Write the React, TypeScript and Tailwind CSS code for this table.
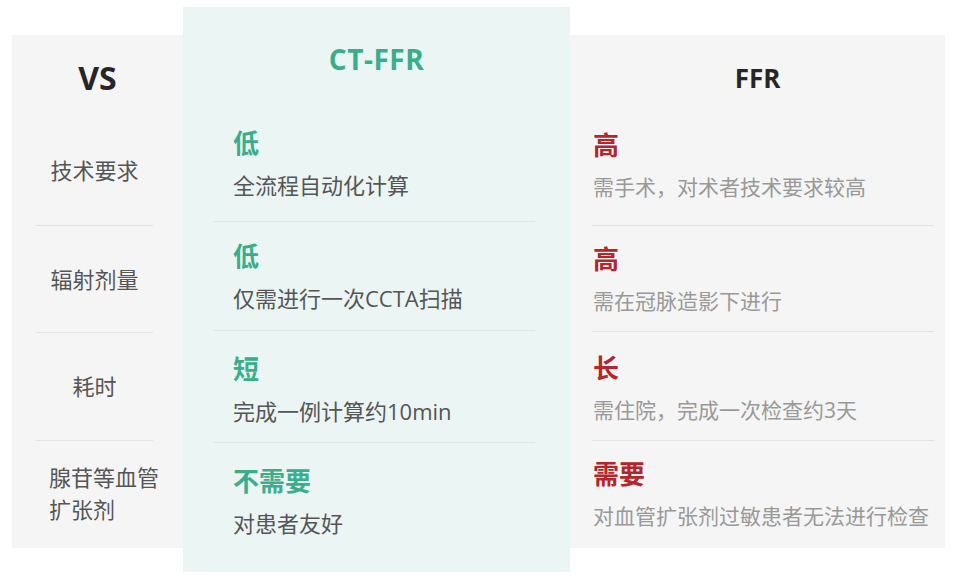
import React from "react"

const font = "font-['Open_Sans','Noto_Sans_CJK_SC',sans-serif]"

type Cell = { title: string; text: string }

const labels = [
  { text: "技术要求", h: "h-[110px]" },
  { text: "辐射剂量", h: "h-[107px]" },
  { text: "耗时", h: "h-[108px]" },
]

const ctffr: (Cell & { cls: string })[] = [
  { title: "低", text: "全流程自动化计算", cls: "h-[111px] pt-[12px] border-b" },
  { title: "低", text: "仅需进行一次CCTA扫描", cls: "h-[109px] pt-[14px] border-b" },
  { title: "短", text: "完成一例计算约10min", cls: "h-[112px] pt-[18px] border-b" },
  { title: "不需要", text: "对患者友好", cls: "flex-1 pt-[18px]" },
]

const ffr: (Cell & { cls: string })[] = [
  { title: "高", text: "需手术，对术者技术要求较高", cls: "h-[115px] pt-[14px] border-b" },
  { title: "高", text: "需在冠脉造影下进行", cls: "h-[106px] pt-[13px] border-b" },
  { title: "长", text: "需住院，完成一次检查约3天", cls: "h-[109px] pt-[16px] border-b" },
  { title: "需要", text: "对血管扩张剂过敏患者无法进行检查", cls: "flex-1 pt-[13px]" },
]

export default function App() {
  return (
    <div className={`w-[960px] h-[582px] bg-white ${font}`}>
      <div className="flex items-start pt-[7px] pl-[12px]">
        {/* left: row labels */}
        <div className="mt-[28px] w-[171px] h-[513px] bg-[#f5f5f5] flex flex-col">
          <div className="h-[81px] flex items-center justify-center pt-[5px] text-[32px] font-bold text-[#262626]">
            VS
          </div>
          <div className="ml-[24px] mr-[30px] flex flex-col flex-1">
            {labels.map((l) => (
              <div
                key={l.text}
                className={`${l.h} border-b border-[#e4e4e4] flex items-center justify-center text-[22px] text-[#555]`}
              >
                {l.text}
              </div>
            ))}
            <div className="flex-1 flex flex-col justify-center pl-[13px] pb-[3px] text-[22px] leading-[32px] text-[#555] whitespace-nowrap">
              <span>腺苷等血管</span>
              <span>扩张剂</span>
            </div>
          </div>
        </div>

        {/* middle: CT-FFR */}
        <div className="w-[387px] h-[565px] bg-[#ebf6f4] flex flex-col">
          <div className="h-[104px] flex items-center justify-center text-[28px] font-bold text-[#3aae8b] tracking-[0.5px]">
            CT-FFR
          </div>
          <div className="ml-[30px] mr-[35px] flex flex-col flex-1">
            {ctffr.map((c, i) => (
              <div key={i} className={`${c.cls} border-[#dde9e6] pl-[20px]`}>
                <div className="text-[26px] leading-[40px] font-bold text-[#3aae8b]">{c.title}</div>
                <div className="mt-[2px] text-[22px] leading-[40px] text-[#555]">{c.text}</div>
              </div>
            ))}
          </div>
        </div>

        {/* right: FFR */}
        <div className="mt-[28px] w-[375px] h-[513px] bg-[#f5f5f5] flex flex-col">
          <div className="h-[76px] flex items-center justify-center pt-[10px] text-[26px] font-bold text-[#262626]">
            FFR
          </div>
          <div className="ml-[22px] mr-[11px] flex flex-col flex-1">
            {ffr.map((c, i) => (
              <div key={i} className={`${c.cls} border-[#e4e4e4] pl-[1px]`}>
                <div className="text-[26px] leading-[40px] font-bold text-[#b3262b]">{c.title}</div>
                <div className="mt-[2px] text-[21px] leading-[40px] text-[#999]">{c.text}</div>
              </div>
            ))}
          </div>
        </div>
      </div>
    </div>
  )
}
